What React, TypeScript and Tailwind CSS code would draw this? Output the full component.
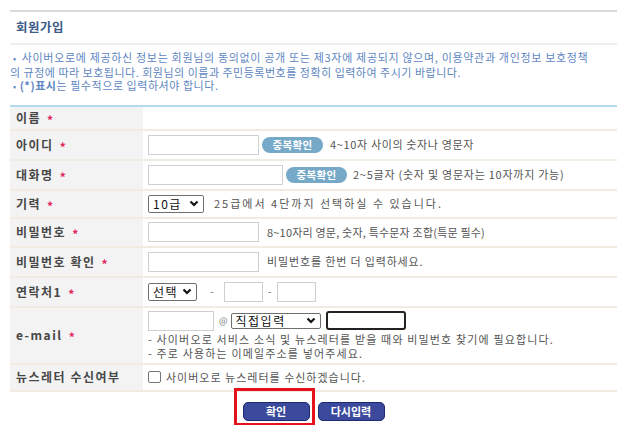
import React from "react";

function Star() {
  return <span className="ml-[6px] inline-block translate-y-[2px] text-[#e3245a] font-bold text-[12px] tracking-normal">*</span>;
}

function Row({
  label,
  req = true,
  h,
  children,
}: {
  label: string;
  req?: boolean;
  h: string;
  children?: React.ReactNode;
}) {
  return (
    <div className={`flex border-b-2 border-[#f2ebe3] ${h}`}>
      <div className="w-[133px] shrink-0 bg-[#f3f3f3] flex items-center pl-[6px] text-[12px] font-bold text-[#474747] tracking-[1.5px]">
        <span>{label}</span>
        {req && <Star />}
      </div>
      <div className="flex-1 flex items-center pl-[5px] text-[11px] text-[#555]">{children}</div>
    </div>
  );
}

function Chevron() {
  return (
    <svg width="10" height="7" viewBox="0 0 10 7" className="shrink-0">
      <polyline points="1.5,1.5 5,5 8.5,1.5" fill="none" stroke="#111" strokeWidth="2.2" />
    </svg>
  );
}

function Sel({ text, w, h }: { text: string; w: string; h: string }) {
  return (
    <div className={`${w} ${h} border border-[#6f6f6f] rounded-[2px] bg-white flex items-center justify-between pl-[4px] pr-[4px] text-[12px] text-[#111] tracking-[1.5px]`}>
      <span>{text}</span>
      <Chevron />
    </div>
  );
}

function Inp({ w }: { w: string }) {
  return <div className={`${w} h-[20px] border border-[#cfcfcf] bg-white`} />;
}

function Dup() {
  return (
    <div className="ml-[3px] w-[61px] h-[16px] rounded-full bg-[#76a9c8] flex items-center justify-center text-[10.5px] font-bold text-white tracking-[0.3px]">
      중복확인
    </div>
  );
}

export default function App() {
  return (
    <div className="w-[622px] h-[425px] bg-white overflow-hidden font-['Noto_Sans_CJK_KR','Noto_Sans',sans-serif]">
      <div className="ml-[10px] mt-[10px] w-[607px]">
        <div className="border-t-2 border-[#dadada] h-[33px] flex items-center pl-[6px] text-[12.5px] font-bold text-[#3c5a8a] tracking-[0.5px]">
          회원가입
        </div>
        <div className="border-t-2 border-[#eeeeee]" />
        <div className="mt-[6px] text-[11px] leading-[13.5px] text-[#5e86c2]">
          <div className="whitespace-nowrap pl-[3px] tracking-[0.68px]">
            <span className="text-[9px] mr-[5px]">•</span>사이버오로에 제공하신 정보는 회원님의 동의없이 공개 또는 제3자에 제공되지 않으며, 이용약관과 개인정보 보호정책
          </div>
          <div className="whitespace-nowrap tracking-[0.5px]">의 규정에 따라 보호됩니다. 회원님의 이름과 주민등록번호를 정확히 입력하여 주시기 바랍니다.</div>
          <div className="whitespace-nowrap pl-[3px] tracking-[0.55px]">
            <span className="text-[9px] mr-[3px]">•</span>
            <span className="font-bold">(*)표시</span>는 필수적으로 입력하셔야 합니다.
          </div>
        </div>

        <div className="mt-[11px] border-t-2 border-[#b3dbf0]">
          <Row label="이름" h="h-[24px]" />
          <Row label="아이디" h="h-[30px]">
            <Inp w="w-[111px]" />
            <Dup />
            <span className="ml-[7px] tracking-[0.65px]">4~10자 사이의 숫자나 영문자</span>
          </Row>
          <Row label="대화명" h="h-[30px]">
            <Inp w="w-[135px]" />
            <Dup />
            <span className="ml-[6px] tracking-[0.75px]">2~5글자 (숫자 및 영문자는 10자까지 가능)</span>
          </Row>
          <Row label="기력" h="h-[28px]">
            <Sel text="10급" w="w-[56px]" h="h-[18px]" />
            <span className="ml-[10px] tracking-[2px]">25급에서 4단까지 선택하실 수 있습니다.</span>
          </Row>
          <Row label="비밀번호" h="h-[29px]">
            <Inp w="w-[111px]" />
            <span className="ml-[8px] tracking-[0.2px]">8~10자리 영문, 숫자, 특수문자 조합(특문 필수)</span>
          </Row>
          <Row label="비밀번호 확인" h="h-[30px]">
            <Inp w="w-[111px]" />
            <span className="ml-[8px] tracking-[0.85px]">비밀번호를 한번 더 입력하세요.</span>
          </Row>
          <Row label="연락처1" h="h-[30px]">
            <Sel text="선택" w="w-[49px]" h="h-[18px]" />
            <span className="ml-[13px] text-[#777]">-</span>
            <div className="ml-[10px]">
              <Inp w="w-[39px]" />
            </div>
            <span className="ml-[5px] text-[#777]">-</span>
            <div className="ml-[5px]">
              <Inp w="w-[39px]" />
            </div>
          </Row>
          <Row label="e-mail" h="h-[57px]">
            <div className="flex flex-col">
              <div className="flex items-center">
                <Inp w="w-[66px]" />
                <span className="ml-[5px] text-[9px] text-[#777]">@</span>
                <div className="ml-[3px]">
                  <Sel text="직접입력" w="w-[90px]" h="h-[16px]" />
                </div>
                <div className="ml-[5px] w-[80px] h-[19px] border-2 border-[#222] rounded-[3px] bg-white" />
              </div>
              <div className="mt-[1px] leading-[14px] tracking-[1.15px] whitespace-nowrap">
                - 사이버오로 서비스 소식 및 뉴스레터를 받을 때와 비밀번호 찾기에 필요합니다.
              </div>
              <div className="leading-[14px] tracking-[1.15px] whitespace-nowrap">- 주로 사용하는 이메일주소를 넣어주세요.</div>
            </div>
          </Row>
          <Row label="뉴스레터 수신여부" req={false} h="h-[27px]">
            <div className="w-[13px] h-[12px] border border-[#767676] rounded-[2px] bg-white" />
            <span className="ml-[5px] tracking-[1px]">사이버오로 뉴스레터를 수신하겠습니다.</span>
          </Row>
        </div>

        <div className="mt-[10px] flex justify-center gap-[8px]">
          <div className="relative">
            <div className="w-[67px] h-[19px] rounded-[5px] bg-[#3b4a9c] border border-[#1f2b70] flex items-center justify-center text-[11px] font-bold text-white">
              확인
            </div>
            <div className="absolute left-[-9px] top-[-14px] w-[81px] h-[38px] border-[3px] border-[#e5121b]" />
          </div>
          <div className="w-[67px] h-[19px] rounded-[5px] bg-[#3b4a9c] border border-[#1f2b70] flex items-center justify-center text-[11px] font-bold text-white">
            다시입력
          </div>
        </div>
      </div>
    </div>
  );
}
